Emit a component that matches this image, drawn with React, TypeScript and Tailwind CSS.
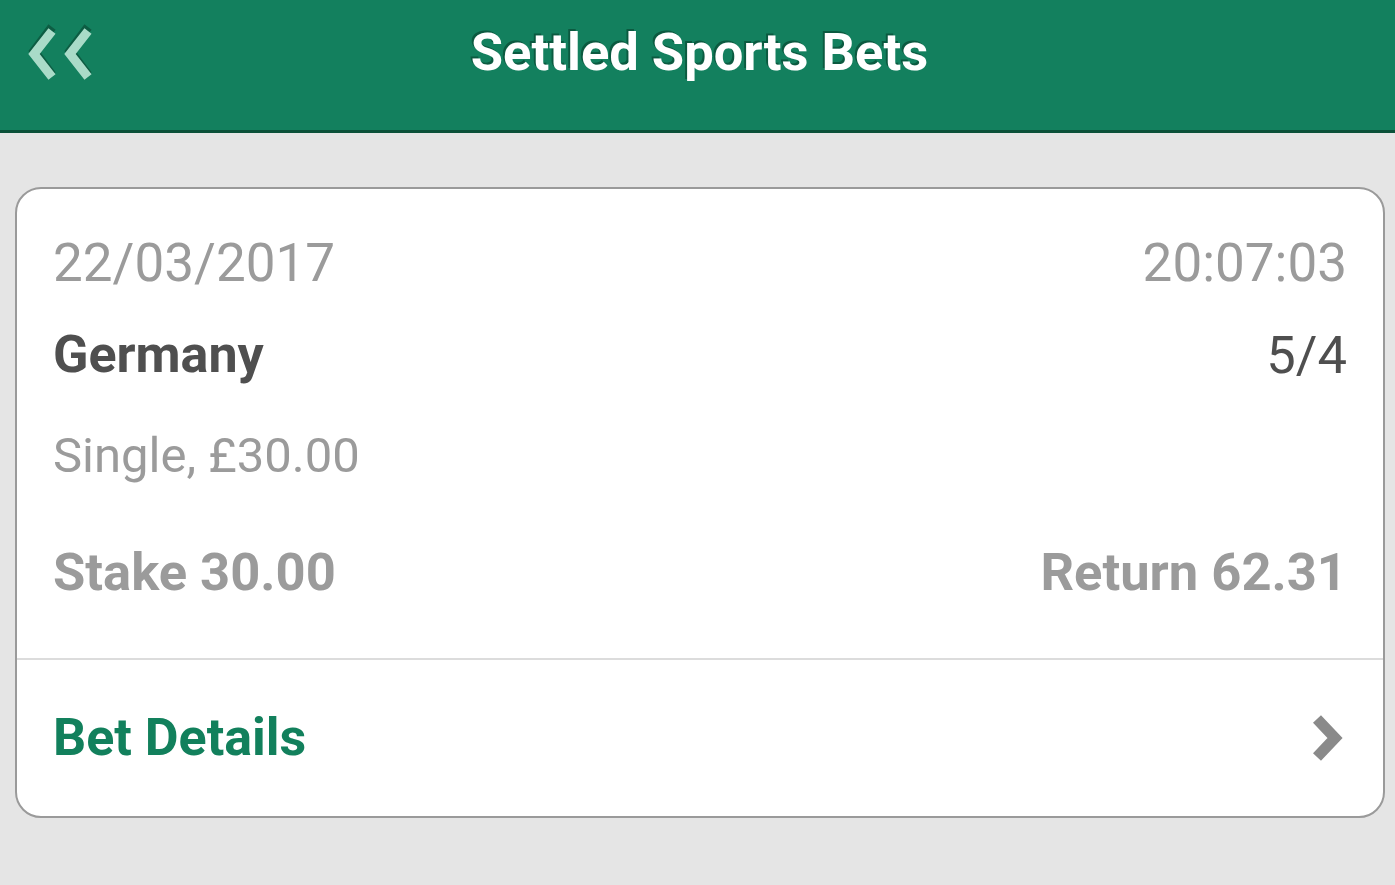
export default function App() {
  return (
    <div className="min-h-[885px] bg-[#e5e5e5] font-['Roboto',sans-serif]">
      {/* Header */}
      <header className="relative flex h-[133px] items-start justify-center border-b-[3px] border-[#0b5139] bg-[#13805e]">
        <button className="absolute left-[26px] top-[23px] h-[62px] w-[76px]">
          <svg viewBox="0 0 76 62" className="h-full w-full">
            <g fill="none" strokeWidth="9" strokeLinecap="butt" strokeLinejoin="miter">
              <path d="M26 7 L8 31 L26 55" stroke="#0d5d43" transform="translate(0 -3)" />
              <path d="M62 7 L44 31 L62 55" stroke="#0d5d43" transform="translate(0 -3)" />
              <path d="M26 8 L8 31 L26 54" stroke="#a9dbc8" />
              <path d="M62 8 L44 31 L62 54" stroke="#a9dbc8" />
            </g>
          </svg>
        </button>
        <h1 className="ml-[4px] mt-[19px] text-[52.5px] font-bold leading-[66px] text-white [text-shadow:-2px_-2px_0_#0b5a40]">
          Settled Sports Bets
        </h1>
      </header>

      {/* Card */}
      <div className="ml-[15px] mr-[10px] pt-[54px]">
        <div className="rounded-[26px] border-2 border-[#9a9a9a] bg-white">
          <div className="px-[36px] pt-[44px] pb-[56px]">
            <div className="flex items-center justify-between text-[53px] leading-[60px] text-[#9b9b9b]">
              <span>22/03/2017</span>
              <span>20:07:03</span>
            </div>
            <div className="mt-[32px] flex items-center justify-between text-[52.5px] leading-[60px] text-[#4f4f4f]">
              <span className="font-bold text-[52px]">Germany</span>
              <span>5/4</span>
            </div>
            <div className="mt-[41px] text-[49px] leading-[60px] text-[#9b9b9b]">Single, £30.00</div>
            <div className="mt-[56px] flex items-center justify-between text-[52.5px] font-bold leading-[60px] text-[#9b9b9b]">
              <span>Stake 30.00</span>
              <span>Return 62.31</span>
            </div>
          </div>
          <div className="h-[2px] bg-[#dcdcdc]" />
          <div className="flex h-[156px] items-center justify-between pl-[36px] pr-[40px]">
            <span className="text-[52px] font-bold text-[#12805c]">Bet Details</span>
            <svg viewBox="0 0 32 50" className="h-[50px] w-[32px]">
              <path d="M6 6 L24 25 L6 44" fill="none" stroke="#8a8a8a" strokeWidth="11" />
            </svg>
          </div>
        </div>
      </div>
    </div>
  );
}
